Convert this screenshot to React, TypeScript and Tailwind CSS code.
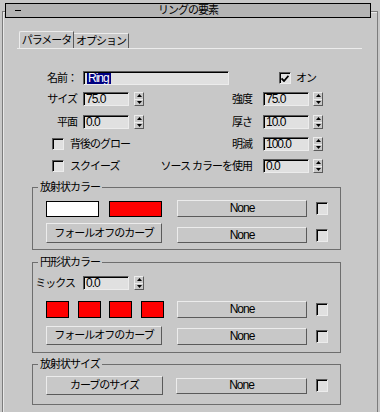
import React from "react";

const raised =
  "border border-t-[#ececec] border-l-[#ececec] border-r-[#5a5a5a] border-b-[#5a5a5a]";
const sunken =
  "border border-t-[#5a5a5a] border-l-[#5a5a5a] border-r-[#ececec] border-b-[#ececec] shadow-[inset_1px_1px_0_#000]";

function NumField({ v, className = "" }: { v: string; className?: string }) {
  return (
    <div
      className={`h-[14px] w-[46px] bg-[#e0e0e0] ${sunken} flex items-center pl-[2px] text-[12px] tracking-[-1px] leading-[12px] ${className}`}
    >
      {v}
    </div>
  );
}

function Spinner({ className = "" }: { className?: string }) {
  return (
    <div className={`w-[10px] h-[14px] bg-[#c8c8c8] ${raised} flex flex-col ${className}`}>
      <div className="flex-1 flex items-center justify-center">
        <svg width="5" height="3" viewBox="0 0 5 3">
          <path d="M2.5 0L5 3H0z" fill="#000" />
        </svg>
      </div>
      <div className="h-px bg-[#ececec]" />
      <div className="flex-1 flex items-center justify-center">
        <svg width="5" height="3" viewBox="0 0 5 3">
          <path d="M0 0H5L2.5 3z" fill="#000" />
        </svg>
      </div>
    </div>
  );
}

function Check({ checked = false, className = "" }: { checked?: boolean; className?: string }) {
  return (
    <div
      className={`w-[12px] h-[12px] bg-[#e0e0e0] ${sunken} flex items-center justify-center shrink-0 ${className}`}
    >
      {checked && (
        <svg width="8" height="7" viewBox="0 0 8 7">
          <path d="M0.5 3.5L3 6L7.5 0.8" stroke="#000" strokeWidth="1.8" fill="none" />
        </svg>
      )}
    </div>
  );
}

function Btn({ children, className = "" }: { children: React.ReactNode; className?: string }) {
  return (
    <div
      className={`bg-[#c8c8c8] ${raised} flex items-center justify-center leading-[13px] shrink-0 ${className}`}
    >
      {children}
    </div>
  );
}

function NoneBtn({ className = "" }: { className?: string }) {
  return (
    <Btn className={className}>
      <span className="text-[12px] tracking-[-1px]">None</span>
    </Btn>
  );
}

function Group({
  title,
  className = "",
  children,
}: {
  title: string;
  className?: string;
  children: React.ReactNode;
}) {
  return (
    <div className={`relative ml-[29px] w-[309px] border border-[#6e6e6e] flex flex-col ${className}`}>
      <span className="absolute -top-[7px] left-[5px] px-[2px] bg-[#c8c8c8] leading-[13px]">
        {title}
      </span>
      {children}
    </div>
  );
}

export default function App() {
  return (
    <div className="w-[380px] h-[412px] bg-[#c8c8c8] overflow-hidden flex flex-col font-['Liberation_Sans','Noto_Sans_CJK_JP',sans-serif] text-[11px] tracking-[-1px] text-black">
      {/* title bar */}
      <div className="relative z-10 mt-[3px] ml-[5px] w-[366px] h-[15px] border border-black bg-[#b4b4b4] flex items-center">
        <span className="ml-[9px] w-[6px] h-px bg-black" />
        <span className="flex-1 text-center pr-[15px] leading-[13px]">リングの要素</span>
      </div>

      {/* panel */}
      <div className="-mt-[7px] ml-[2px] w-[376px] flex-1 border-l border-t border-r border-[#7c7c7c] shadow-[inset_1px_1px_0_#e8e8e8] flex flex-col">
        {/* tabs */}
        <div className="mt-[19px] ml-[14px] w-[345px] h-[18px] border-b border-[#ececec] flex items-end pl-[2px]">
          <div className="h-[17px] w-[55px] border-l border-t border-[#ececec] border-r border-r-[#5a5a5a] rounded-tl-[2px] flex items-center justify-center leading-[13px]">
            パラメータ
          </div>
          <div className="h-[15px] w-[55px] border-t border-[#ececec] border-r border-r-[#5a5a5a] flex items-center justify-center leading-[13px]">
            オプション
          </div>
        </div>

        {/* name row */}
        <div className="mt-[22px] h-[14px] flex items-center">
          <div className="w-[74px] text-right leading-[13px]">名前：</div>
          <div className={`ml-[6px] w-[146px] h-[14px] bg-[#e0e0e0] ${sunken} flex items-center pl-[3px]`}>
            <span className="bg-[#000080] text-white pl-[1px] pr-[2px] text-[12px] leading-[11px]">Ring</span>
          </div>
          <Check checked className="ml-[50px]" />
          <span className="ml-[5px] leading-[13px]">オン</span>
        </div>

        {/* size row */}
        <div className="mt-[7px] h-[14px] flex items-center">
          <div className="w-[74px] text-right leading-[13px]">サイズ</div>
          <NumField v="75.0" className="ml-[6px]" />
          <Spinner className="ml-[5px]" />
          <div className="w-[108px] text-right leading-[13px]">強度</div>
          <NumField v="75.0" className="ml-[11px]" />
          <Spinner className="ml-[4px]" />
        </div>

        {/* plane row */}
        <div className="mt-[9px] h-[14px] flex items-center">
          <div className="w-[74px] text-right leading-[13px]">平面</div>
          <NumField v="0.0" className="ml-[6px]" />
          <Spinner className="ml-[5px]" />
          <div className="w-[108px] text-right leading-[13px]">厚さ</div>
          <NumField v="10.0" className="ml-[11px]" />
          <Spinner className="ml-[4px]" />
        </div>

        {/* glow row */}
        <div className="mt-[8px] h-[14px] flex items-center">
          <div className="w-[141px] flex items-center">
            <Check className="ml-[49px]" />
            <span className="ml-[6px] leading-[13px]">背後のグロー</span>
          </div>
          <div className="w-[108px] text-right leading-[13px]">明滅</div>
          <NumField v="100.0" className="ml-[11px]" />
          <Spinner className="ml-[4px]" />
        </div>

        {/* squeeze row */}
        <div className="mt-[8px] h-[14px] flex items-center">
          <div className="w-[141px] flex items-center">
            <Check className="ml-[49px]" />
            <span className="ml-[6px] leading-[13px]">スクイーズ</span>
          </div>
          <div className="w-[108px] text-right leading-[13px] whitespace-nowrap">ソース カラーを使用</div>
          <NumField v="0.0" className="ml-[11px]" />
          <Spinner className="ml-[4px]" />
        </div>

        {/* group 1 */}
        <Group title="放射状カラー" className="mt-[14px] h-[63px]">
          <div className="mt-[12px] h-[17px] flex items-center pl-[13px]">
            <div className="w-[53px] h-[16px] bg-white border border-black" />
            <div className="ml-[10px] w-[53px] h-[16px] bg-[#ff0000] border border-black" />
            <NoneBtn className="ml-[15px] w-[130px] h-[17px]" />
            <Check className="ml-[9px] h-[13px]" />
          </div>
          <div className="mt-[6px] h-[20px] flex items-end pl-[13px]">
            <Btn className="w-[116px] h-[20px]">フォールオフのカーブ</Btn>
            <NoneBtn className="ml-[15px] w-[130px] h-[16px]" />
            <Check className="ml-[9px] h-[13px] mb-[1px]" />
          </div>
        </Group>

        {/* group 2 */}
        <Group title="円形状カラー" className="mt-[12px] h-[91px]">
          <div className="mt-[13px] h-[14px] flex items-center">
            <div className="w-[42px] text-right leading-[13px]">ミックス</div>
            <NumField v="0.0" className="ml-[8px]" />
            <Spinner className="ml-[5px]" />
          </div>
          <div className="mt-[11px] h-[17px] flex items-center pl-[13px]">
            <div className="w-[23px] h-[17px] bg-[#ff0000] border border-black" />
            <div className="ml-[9px] w-[23px] h-[17px] bg-[#ff0000] border border-black" />
            <div className="ml-[8px] w-[23px] h-[17px] bg-[#ff0000] border border-black" />
            <div className="ml-[9px] w-[23px] h-[17px] bg-[#ff0000] border border-black" />
            <NoneBtn className="ml-[13px] w-[130px] h-[17px]" />
            <Check className="ml-[9px] h-[13px]" />
          </div>
          <div className="mt-[8px] h-[19px] flex items-end pl-[13px]">
            <Btn className="w-[116px] h-[19px]">フォールオフのカーブ</Btn>
            <NoneBtn className="ml-[15px] w-[130px] h-[17px]" />
            <Check className="ml-[9px] h-[13px] mb-[2px]" />
          </div>
        </Group>

        {/* group 3 */}
        <Group title="放射状サイズ" className="mt-[11px] h-[41px]">
          <div className="mt-[11px] h-[19px] flex items-center pl-[13px]">
            <Btn className="w-[117px] h-[19px]">カーブのサイズ</Btn>
            <NoneBtn className="ml-[13px] w-[131px] h-[16px]" />
            <Check className="ml-[9px] h-[13px]" />
          </div>
        </Group>
      </div>
    </div>
  );
}
